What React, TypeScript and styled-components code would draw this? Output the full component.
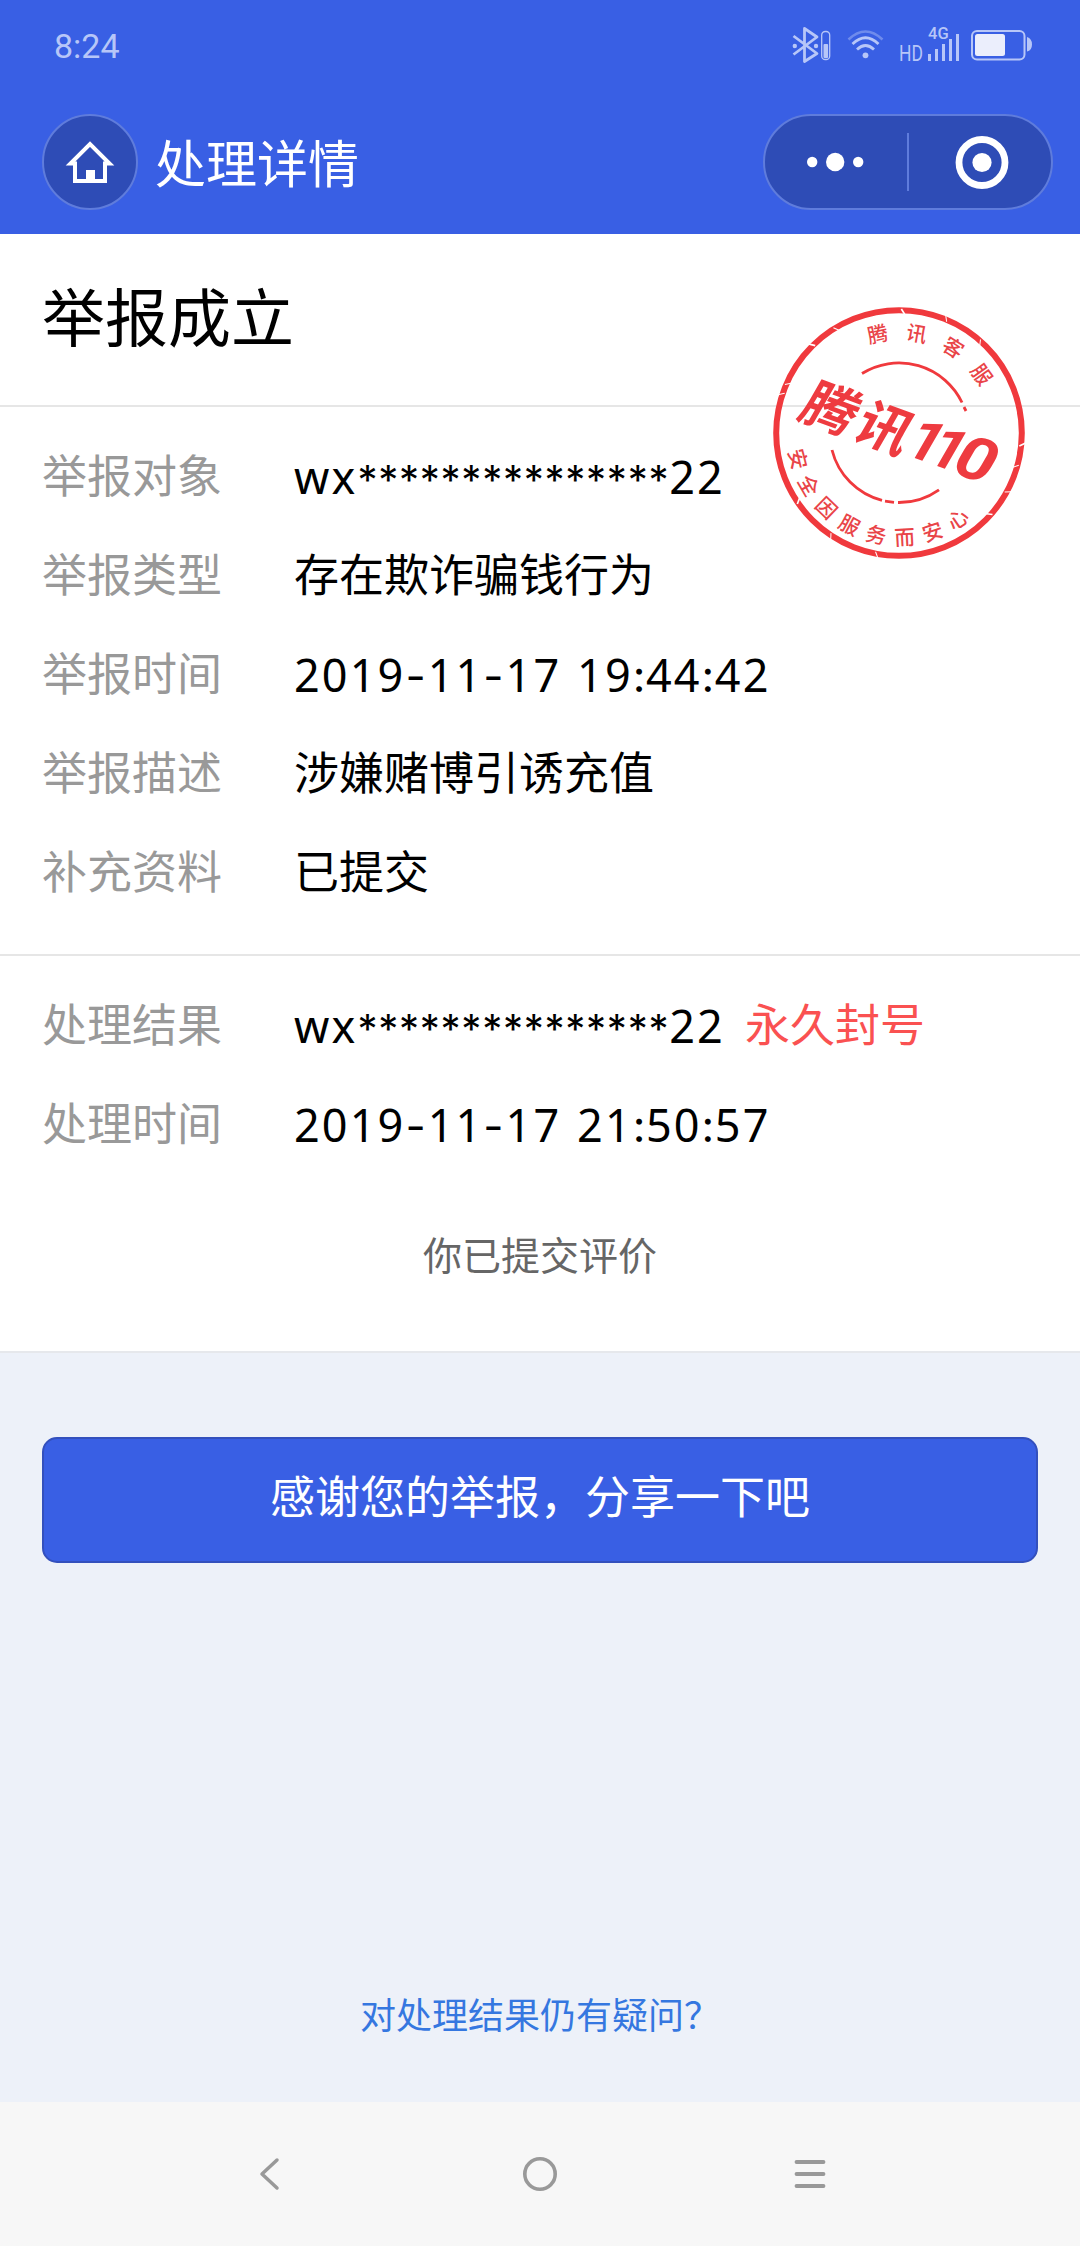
import React from 'react';
import styled, { createGlobalStyle } from 'styled-components';

const GlobalStyle = createGlobalStyle`
  * {
    box-sizing: border-box;
  }
  body {
    margin: 0;
    background: #edf1f9;
    font-family: 'Noto Sans CJK SC', sans-serif;
  }
`;

const Page = styled.div`
  width: 1080px;
  height: 2246px;
  display: flex;
  flex-direction: column;
  overflow: hidden;
`;

const Header = styled.header`
  height: 234px;
  background: #395fe4;
`;

const StatusBar = styled.div`
  height: 90px;
  padding: 0 46px 0 54px;
  display: flex;
  justify-content: space-between;
  align-items: center;
`;

const Clock = styled.span`
  font: 400 34px/40px Roboto, sans-serif;
  color: #b7c6f8;
  padding-top: 2px;
`;

const TitleBar = styled.div`
  height: 144px;
  padding: 24px 27px 24px 42px;
  display: flex;
`;

const HomeButton = styled.button`
  width: 96px;
  height: 96px;
  padding: 0;
  border-radius: 48px;
  border: 2px solid #5f7cdc;
  background: #2e4cb6;
  display: flex;
  align-items: center;
  justify-content: center;
`;

const Title = styled.h1`
  margin: 0 auto 0 17px;
  font-size: 51px;
  font-weight: 400;
  line-height: 95px;
  color: white;
`;

const Capsule = styled.div`
  width: 290px;
  height: 96px;
  border-radius: 48px;
  border: 2px solid #5f7cdc;
  background: #2e4cb6;
  display: grid;
  grid-template-columns: 142px 2px 142px;
  align-items: center;
  justify-items: center;
`;

const CapsuleLine = styled.div`
  width: 2px;
  height: 58px;
  background: #5f7cdc;
`;

const Card = styled.main`
  height: 1119px;
  position: relative;
  background: white;
  border-bottom: 2px solid #e6e8ec;
`;

const Heading = styled.h2`
  margin: 0;
  height: 173px;
  padding: 33px 42px 0;
  font-size: 63px;
  font-weight: 400;
  line-height: 94px;
  color: black;
  border-bottom: 2px solid #e6e6e6;
`;

const Section = styled.section<{ $height: number }>`
  height: ${p => p.$height}px;
  padding: 18px 42px 0;
  & + & {
    border-top: 2px solid #e6e6e6;
  }
`;

const Row = styled.div`
  display: flex;
  height: 99px;
  font-size: 45px;
  line-height: 98px;
  white-space: pre;
`;

const Label = styled.span`
  flex: none;
  width: 252px;
  color: #999;
`;

const Value = styled.span`
  color: black;
`;

const Latin = styled(Value)`
  font-family: 'Noto Sans', sans-serif;
  font-size: 45px;
  line-height: 103px;
  letter-spacing: 2.1px;
  word-spacing: 2px;
`;

const Mark = styled.span<{ $size: number; $spacing: number }>`
  font-family: Inter, sans-serif;
  font-size: ${p => p.$size}px;
  line-height: 1;
  letter-spacing: ${p => p.$spacing}px;
`;

const Banned = styled.span`
  margin-left: 20px;
  color: #fa5151;
`;

const Rated = styled.p`
  margin: 0;
  padding-top: 52px;
  font-size: 39px;
  line-height: 58px;
  text-align: center;
  color: #666;
`;

const Stamp = styled.svg`
  position: absolute;
  left: 769px;
  top: 69px;
`;

const Actions = styled.div`
  flex: 1;
  padding: 84px 42px 0;
  display: flex;
  flex-direction: column;
  align-items: center;
  background: #edf1f9;
`;

const ShareButton = styled.button`
  width: 996px;
  height: 126px;
  padding: 0 0 12px;
  border: 2px solid #3350bd;
  border-radius: 15px;
  background: #395fe4;
  color: white;
  font-family: inherit;
  font-size: 45px;
`;

const HelpLink = styled.a`
  margin: auto 0 62px;
  font-size: 36px;
  line-height: 54px;
  color: #3577e0;
`;

const NavBar = styled.nav`
  height: 144px;
  background: #f7f7f7;
  display: flex;
  justify-content: center;
  align-items: center;
  gap: 230px;
`;

const reportRows = [
  { label: '举报对象', value: 'wx***************22', latin: true },
  { label: '举报类型', value: '存在欺诈骗钱行为' },
  { label: '举报时间', value: '2019-11-17 19:44:42', latin: true },
  { label: '举报描述', value: '涉嫌赌博引诱充值' },
  { label: '补充资料', value: '已提交' },
];

const marks: Record<string, { $size: number; $spacing: number }> = {
  '*': { $size: 40, $spacing: 0.75 },
  '-': { $size: 44, $spacing: 2 },
  ':': { $size: 44, $spacing: 0.5 },
};

// punctuation comes from a second font, each mark with its own spacing
const LatinValue = ({ text }: { text: string }) => (
  <Latin>
    {text.split(/(\*+|[-:])/).map((part, i) =>
      i % 2 ? <Mark key={i} {...marks[part[0]]}>{part}</Mark> : part
    )}
  </Latin>
);

const StatusIcons = () => (
  <svg width="246" height="50" viewBox="788 20 246 50" fill="none">
    <g stroke="#b7c6f8" strokeWidth="2.8" strokeLinejoin="round">
      <path d="M793.5 36L817 53.5L804.5 61.5V28.5L817 37L793.5 54.5" />
      <rect x="821.7" y="31.5" width="8" height="28" rx="3.6" strokeWidth="1.3" />
    </g>
    <g fill="#b7c6f8">
      <circle cx="794.8" cy="46" r="2.2" />
      <circle cx="816" cy="46" r="2.2" />
      <rect x="823.5" y="44" width="4.6" height="14" rx="1" />
      <circle cx="865.5" cy="55.3" r="2.9" />
      <path d="M928 54h3v7h-3zM935 49h3v12h-3zM942 44h3v17h-3zM949 39h3v22h-3zM956 34h3v27h-3z" />
    </g>
    <path d="M848.5 39.5Q865.5 23.5 882.5 39.5" stroke="#6f8bec" strokeWidth="2.6" />
    <path d="M852.5 44Q865.5 31.5 878.5 44M857 49.5Q865.5 41.5 874 49.5" stroke="#b7c6f8" strokeWidth="2.8" />
    <text x="899" y="61" fontFamily="Roboto" fontSize="21.5" fontWeight="400" fill="#b7c6f8" textLength="24" lengthAdjust="spacingAndGlyphs">HD</text>
    <text x="928" y="38.8" fontFamily="Roboto" fontSize="16.5" fontWeight="500" fill="#b7c6f8">4G</text>
    <rect x="972" y="31" width="52.5" height="28.5" rx="5" stroke="#b7c6f8" strokeWidth="2" />
    <rect x="975" y="34" width="30" height="22" rx="2.5" fill="#ebeefc" />
    <path d="M1027 37Q1032 38.5 1032 44.5T1027 51.5z" fill="#b7c6f8" />
  </svg>
);

const topRing = ['腾', '讯', '客', '服'];
const bottomRing = ['安', '全', '因', '服', '务', '而', '安', '心'];
const scratches = [2, 22, -31, -45, -66, -72, -124, -147, 42, 95, 106, 118, 132, 190];

const StampArt = () => (
  <Stamp width="260" height="260" viewBox="-130 -130 260 260" fill="none">
    <circle r="122.8" stroke="#f0393d" strokeWidth="6" />
    <g stroke="#f0393d" strokeWidth="2.8">
      <path d="M-37 -59.5A70 70 0 0 1 63 -30.5M65 -26L67 -22" />
      <path d="M-67 17A69.5 69.5 0 0 0 -17 67.4M-14 68.2L-5 69.4M-1 69.5A69.5 69.5 0 0 0 40 56.8" />
    </g>
    {scratches.map((angle, i) => (
      <path
        key={angle}
        transform={`rotate(${angle})`}
        d={i % 2 ? 'M-1 -127L2.5 -121' : 'M-2 -124L1.5 -119'}
        stroke="white"
        strokeWidth={i % 3 ? 1 : 1.7}
      />
    ))}
    <g fill="#e94448" fontFamily="'Noto Sans CJK SC'" fontWeight="500" fontSize="20.5" textAnchor="middle">
      {topRing.map((char, i) => (
        <text key={i} transform={`rotate(${-12.2 + i * 22.3})`} y="-93.5">{char}</text>
      ))}
      {bottomRing.map((char, i) => (
        <text key={i} transform={`rotate(${75.5 - i * 15.7})`} y="112">{char}</text>
      ))}
    </g>
    <g transform="rotate(20) skewX(-10)" fill="#ee3b40" fontWeight="700" textAnchor="middle">
      <text x="-72" y="20" fontFamily="'Noto Sans CJK SC'" fontSize="54">腾</text>
      <text x="-14.5" y="20" fontFamily="'Noto Sans CJK SC'" fontSize="54">讯</text>
      <g fontFamily="Roboto" fontSize="58">
        <text x="28.5" y="18">1</text>
        <text x="52.5" y="18">1</text>
        <text transform="translate(82 19) scale(1.17 1.04)">0</text>
      </g>
    </g>
  </Stamp>
);

const App: React.FC = () => (
  <Page>
    <GlobalStyle />
    <Header>
      <StatusBar>
        <Clock>8:24</Clock>
        <StatusIcons />
      </StatusBar>
      <TitleBar>
        <HomeButton>
          <svg width="52" height="52" viewBox="64 136 52 52" fill="none">
            <path d="M75 163.5H70.5L90 144L109.5 163.5H105V181H75z" stroke="white" strokeWidth="4" />
            <path d="M86 170h9v11h-9z" fill="white" />
          </svg>
        </HomeButton>
        <Title>处理详情</Title>
        <Capsule>
          <svg width="58" height="20" viewBox="0 0 58 20" fill="white">
            <circle cx="5.2" cy="10" r="5.2" />
            <circle cx="28.2" cy="10" r="9.2" />
            <circle cx="51.2" cy="10" r="5.2" />
          </svg>
          <CapsuleLine />
          <svg width="58" height="54" viewBox="0 0 58 54" fill="none">
            <circle cx="31" cy="27.5" r="23" stroke="white" strokeWidth="6.8" />
            <circle cx="31" cy="27.5" r="9.6" fill="white" />
          </svg>
        </Capsule>
      </TitleBar>
    </Header>
    <Card>
      <Heading>举报成立</Heading>
      <Section $height={547}>
        {reportRows.map(row => (
          <Row key={row.label}>
            <Label>{row.label}</Label>
            {row.latin ? <LatinValue text={row.value} /> : <Value>{row.value}</Value>}
          </Row>
        ))}
      </Section>
      <Section $height={396}>
        <Row>
          <Label>处理结果</Label>
          <LatinValue text="wx***************22" />
          <Banned>永久封号</Banned>
        </Row>
        <Row>
          <Label>处理时间</Label>
          <LatinValue text="2019-11-17 21:50:57" />
        </Row>
        <Rated>你已提交评价</Rated>
      </Section>
      <StampArt />
    </Card>
    <Actions>
      <ShareButton>感谢您的举报，分享一下吧</ShareButton>
      <HelpLink>对处理结果仍有疑问？</HelpLink>
    </Actions>
    <NavBar>
      <svg width="40" height="40" viewBox="0 0 40 40" fill="none">
        <path d="M27 6L12 20L27 34" stroke="#999" strokeWidth="3.5" strokeLinecap="round" strokeLinejoin="round" />
      </svg>
      <svg width="40" height="40" viewBox="0 0 40 40" fill="none">
        <circle cx="20" cy="20" r="15.2" stroke="#999" strokeWidth="3.6" />
      </svg>
      <svg width="40" height="40" viewBox="0 0 40 40" fill="none">
        <path d="M6.5 8H33.5M6.5 20H33.5M6.5 32H33.5" stroke="#999" strokeWidth="3.8" strokeLinecap="round" />
      </svg>
    </NavBar>
  </Page>
);

export default App;
